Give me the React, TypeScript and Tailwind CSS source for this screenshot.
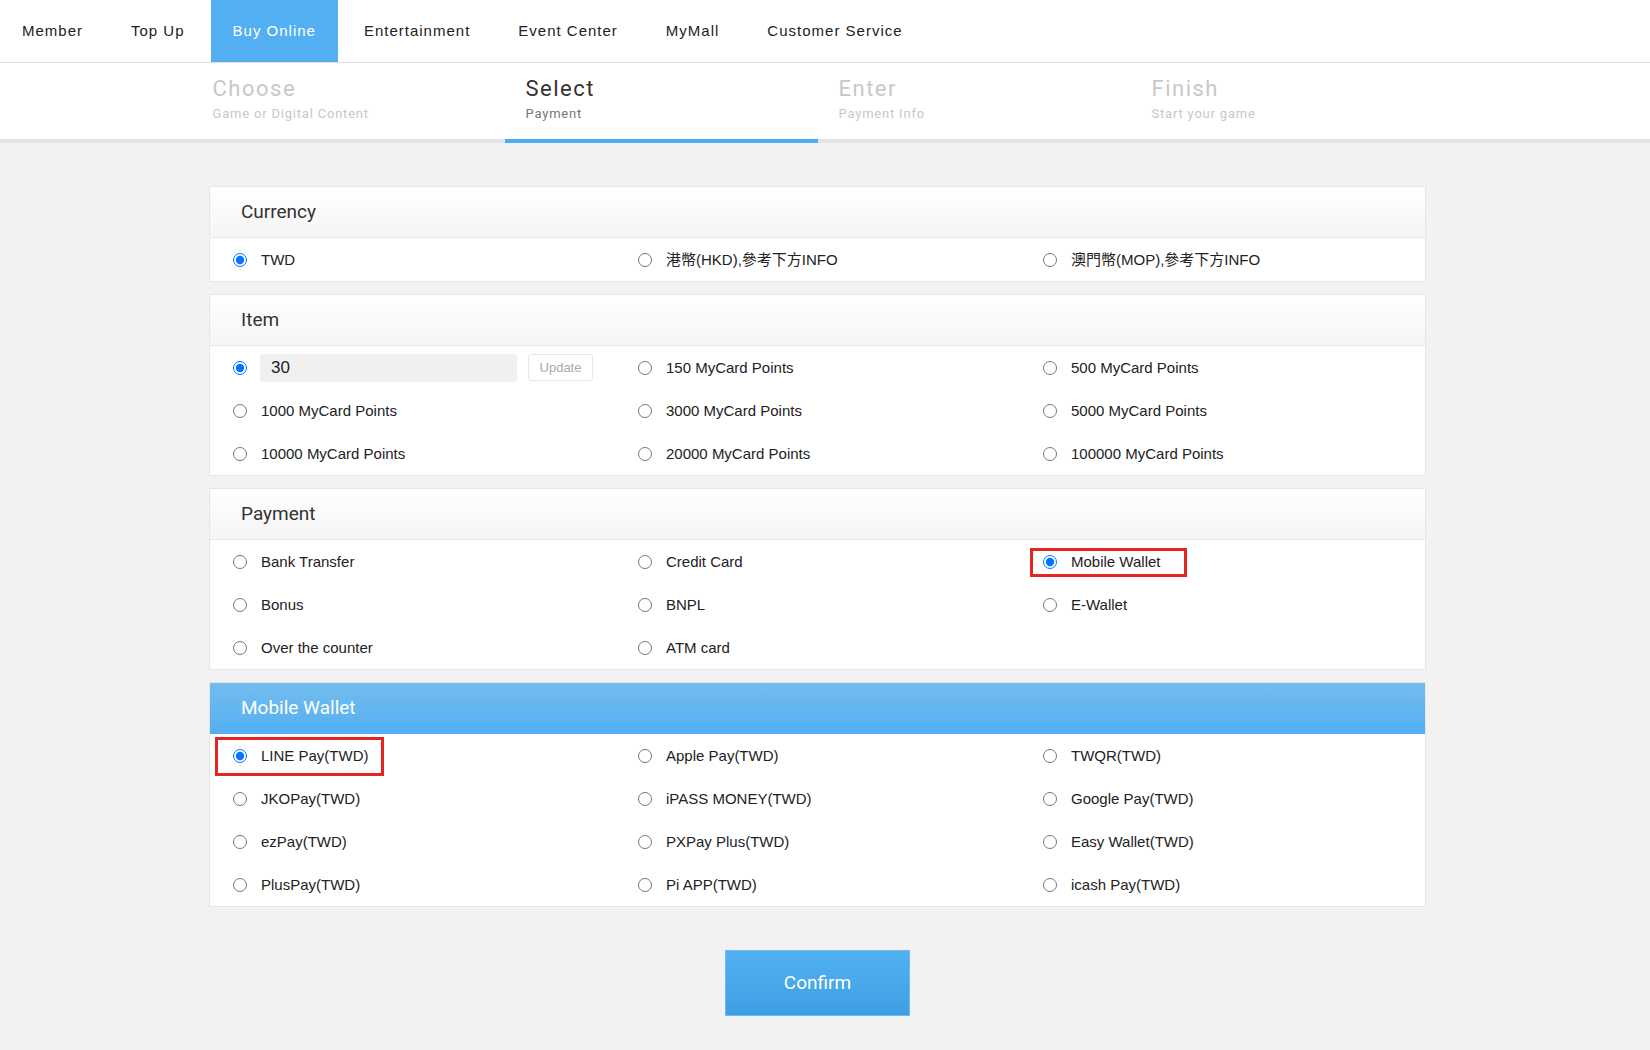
import React from "react";

const navItems = ["Member", "Top Up", "Buy Online", "Entertainment", "Event Center", "MyMall", "Customer Service"];

const steps = [
  { t: "Choose", s: "Game or Digital Content", active: false },
  { t: "Select", s: "Payment", active: true },
  { t: "Enter", s: "Payment Info", active: false },
  { t: "Finish", s: "Start your game", active: false },
];

const labelFont = { fontFamily: '"Liberation Sans", Arial, "Noto Sans CJK TC", sans-serif' };
const roboto = { fontFamily: 'Roboto, "Liberation Sans", sans-serif' };

function Radio({ name, checked }: { name: string; checked?: boolean }) {
  return (
    <input
      type="radio"
      name={name}
      defaultChecked={checked}
      className="m-0 w-[14px] h-[14px] shrink-0"
    />
  );
}

function Cell({
  name,
  label,
  checked,
  children,
}: {
  name: string;
  label?: string;
  checked?: boolean;
  children?: React.ReactNode;
}) {
  return (
    <div className="relative h-[43px] flex items-center pl-[23px]">
      <Radio name={name} checked={checked} />
      {label !== undefined && (
        <span className="ml-[14px] text-[15px] text-[#222] leading-none" style={labelFont}>
          {label}
        </span>
      )}
      {children}
    </div>
  );
}

function Card({
  title,
  blue,
  children,
}: {
  title: string;
  blue?: boolean;
  children: React.ReactNode;
}) {
  return (
    <div className="border border-[#e6e6e6] bg-white">
      {blue ? (
        <div
          className="h-[51px] flex items-center pl-[31px] bg-linear-to-b from-[#73bcee] to-[#52b0f3] text-white text-[19px]"
          style={roboto}
        >
          {title}
        </div>
      ) : (
        <div
          className="h-[51px] flex items-center pl-[31px] bg-linear-to-b from-white to-[#f5f5f5] border-b border-[#e8e8e8] text-[#333] text-[19px]"
          style={roboto}
        >
          {title}
        </div>
      )}
      <div className="grid grid-cols-3">{children}</div>
    </div>
  );
}

export default function App() {
  return (
    <div className="min-h-screen bg-[#f2f2f2]">
      <nav className="h-[63px] bg-white border-b border-[#dedede] flex gap-[4px]" style={labelFont}>
        {navItems.map((n) => (
          <div
            key={n}
            className={
              n === "Buy Online"
                ? "h-[62px] flex items-center px-[22px] text-[15px] tracking-[1px] bg-[#52aff2] text-white"
                : "h-[62px] flex items-center px-[22px] text-[15px] tracking-[1px] text-[#222]"
            }
          >
            {n}
          </div>
        ))}
      </nav>

      <div className="bg-white border-b-4 border-[#e3e3e3]">
        <div className="w-[1635px]">
          <div className="w-[1252px] mx-auto flex">
            {steps.map((st) => (
              <div
                key={st.t}
                className={
                  st.active
                    ? "w-[313px] h-[80px] -mb-[4px] border-b-4 border-[#4eadf0] pl-[21px] pt-[13px]"
                    : "w-[313px] h-[80px] -mb-[4px] border-b-4 border-transparent pl-[21px] pt-[13px]"
                }
                style={roboto}
              >
                <div
                  className={
                    st.active
                      ? "text-[22px] leading-[26px] tracking-[1.5px] text-[#333]"
                      : "text-[22px] leading-[26px] tracking-[1.5px] text-[#c8c8c8]"
                  }
                >
                  {st.t}
                </div>
                <div
                  className={
                    st.active
                      ? "mt-[4px] text-[13px] leading-[16px] tracking-[0.8px] text-[#777]"
                      : "mt-[4px] text-[13px] leading-[16px] tracking-[0.8px] text-[#c8c8c8]"
                  }
                >
                  {st.s}
                </div>
              </div>
            ))}
          </div>
        </div>
      </div>

      <div className="w-[1635px]">
        <div className="w-[1217px] mx-auto pt-[43px] flex flex-col gap-[12px]">
          <Card title="Currency">
            <Cell name="cur" label="TWD" checked />
            <Cell name="cur" label="港幣(HKD),參考下方INFO" />
            <Cell name="cur" label="澳門幣(MOP),參考下方INFO" />
          </Card>

          <Card title="Item">
            <Cell name="item" checked>
              <div
                className="ml-[13px] w-[257px] h-[28px] rounded-[3px] bg-[#f0f0f0] flex items-center pl-[11px] text-[17px] text-[#222]"
                style={labelFont}
              >
                30
              </div>
              <div
                className="ml-[11px] w-[65px] h-[27px] rounded-[3px] border border-[#e6e6e6] bg-white flex items-center justify-center text-[13px] text-[#aaa]"
                style={labelFont}
              >
                Update
              </div>
            </Cell>
            <Cell name="item" label="150 MyCard Points" />
            <Cell name="item" label="500 MyCard Points" />
            <Cell name="item" label="1000 MyCard Points" />
            <Cell name="item" label="3000 MyCard Points" />
            <Cell name="item" label="5000 MyCard Points" />
            <Cell name="item" label="10000 MyCard Points" />
            <Cell name="item" label="20000 MyCard Points" />
            <Cell name="item" label="100000 MyCard Points" />
          </Card>

          <Card title="Payment">
            <Cell name="pay" label="Bank Transfer" />
            <Cell name="pay" label="Credit Card" />
            <Cell name="pay" label="Mobile Wallet" checked>
              <div className="absolute left-[10px] top-[8px] w-[157px] h-[29px] border-[3px] border-[#e52521] pointer-events-none" />
            </Cell>
            <Cell name="pay" label="Bonus" />
            <Cell name="pay" label="BNPL" />
            <Cell name="pay" label="E-Wallet" />
            <Cell name="pay" label="Over the counter" />
            <Cell name="pay" label="ATM card" />
            <div />
          </Card>

          <Card title="Mobile Wallet" blue>
            <Cell name="mw" label="LINE Pay(TWD)" checked>
              <div className="absolute left-[5px] top-[3px] w-[169px] h-[39px] border-[3px] border-[#e52521] pointer-events-none" />
            </Cell>
            <Cell name="mw" label="Apple Pay(TWD)" />
            <Cell name="mw" label="TWQR(TWD)" />
            <Cell name="mw" label="JKOPay(TWD)" />
            <Cell name="mw" label="iPASS MONEY(TWD)" />
            <Cell name="mw" label="Google Pay(TWD)" />
            <Cell name="mw" label="ezPay(TWD)" />
            <Cell name="mw" label="PXPay Plus(TWD)" />
            <Cell name="mw" label="Easy Wallet(TWD)" />
            <Cell name="mw" label="PlusPay(TWD)" />
            <Cell name="mw" label="Pi APP(TWD)" />
            <Cell name="mw" label="icash Pay(TWD)" />
          </Card>

          <div className="flex justify-center mt-[31px]">
            <button
              className="w-[185px] h-[66px] border border-[#6cbcf2] bg-linear-to-b from-[#52b1f2] to-[#3d9fe3] text-white text-[19px]"
              style={roboto}
            >
              Confirm
            </button>
          </div>
        </div>
      </div>
    </div>
  );
}
